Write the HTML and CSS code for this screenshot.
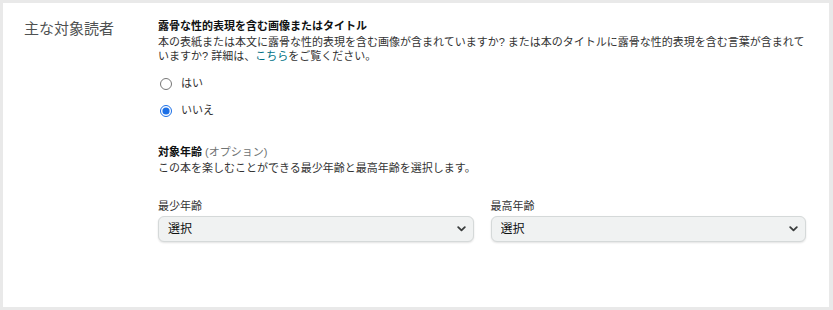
FILE: index.html
```html
<!DOCTYPE html>
<html lang="ja">
<head>
<meta charset="utf-8">
<link rel="stylesheet" href="styles.css">
</head>
<body>
<div class="panel">
  <div class="side-title">主な対象読者</div>
  <div class="content">
    <div class="heading">露骨な性的表現を含む画像またはタイトル</div>
    <p class="desc">本の表紙または本文に露骨な性的表現を含む画像が含まれていますか? または本のタイトルに露骨な性的表現を含む言葉が含まれていますか? 詳細は、<a class="link" href="#">こちら</a>をご覧ください。</p>
    <div class="radios">
      <label class="radio"><input type="radio" name="adult"><span>はい</span></label>
      <label class="radio"><input type="radio" name="adult" checked><span>いいえ</span></label>
    </div>
    <div class="heading age-heading">対象年齢 <span class="optional">(オプション)</span></div>
    <p class="desc">この本を楽しむことができる最少年齢と最高年齢を選択します。</p>
    <div class="selects">
      <div class="field">
        <div class="field-label">最少年齢</div>
        <div class="select-wrap">
          <select class="select"><option>選択</option></select>
          <svg class="chevron" width="9" height="6" viewBox="0 0 9 6"><path d="M1.2 1.2 L4.5 4.4 L7.8 1.2" fill="none" stroke="#3a3d3d" stroke-width="1.8" stroke-linecap="round" stroke-linejoin="round"/></svg>
        </div>
      </div>
      <div class="field">
        <div class="field-label">最高年齢</div>
        <div class="select-wrap">
          <select class="select"><option>選択</option></select>
          <svg class="chevron" width="9" height="6" viewBox="0 0 9 6"><path d="M1.2 1.2 L4.5 4.4 L7.8 1.2" fill="none" stroke="#3a3d3d" stroke-width="1.8" stroke-linecap="round" stroke-linejoin="round"/></svg>
        </div>
      </div>
    </div>
  </div>
</div>
</body>
</html>
```

FILE: styles.css
```css
html, body {
  margin: 0;
  padding: 0;
}
body {
  background: #e9e9e9;
  padding: 3px 4px 3px 3px;
  font-family: "Liberation Sans", "Noto Sans CJK JP", sans-serif;
  color: #0f1111;
}
.panel {
  background: #ffffff;
  height: 304px;
  box-sizing: border-box;
  display: flex;
  padding: 16px 23px 0 21px;
}
.side-title {
  width: 134px;
  flex: none;
  font-size: 15px;
  line-height: 20px;
  color: #4f5252;
}
.content {
  flex: 1;
  min-width: 0;
}
.heading {
  font-size: 11px;
  line-height: 15px;
  font-weight: bold;
  color: #0f1111;
}
.optional {
  font-weight: normal;
  color: #6f7373;
}
.desc {
  margin: 1px 0 0 0;
  font-size: 11px;
  line-height: 14px;
  color: #333;
}
.link {
  color: #007185;
  text-decoration: none;
}
.radios {
  display: flex;
  flex-direction: column;
  gap: 10px;
  margin-top: 12px;
}
.radio {
  display: flex;
  align-items: center;
  gap: 9px;
  font-size: 11px;
  line-height: 17px;
  color: #333;
  padding-left: 2px;
}
.radio input {
  width: 12px;
  height: 12px;
  margin: 0;
  accent-color: #1b6fe6;
}
.age-heading {
  margin-top: 26px;
}
.selects {
  display: grid;
  grid-template-columns: 1fr 1fr;
  gap: 17px;
  margin-top: 24px;
}
.field-label {
  font-size: 11px;
  line-height: 14px;
  color: #333;
}
.select-wrap {
  position: relative;
  margin-top: 3px;
}
.select {
  appearance: none;
  -webkit-appearance: none;
  display: block;
  width: 100%;
  height: 26px;
  box-sizing: border-box;
  border: 1px solid #d5d9d9;
  border-radius: 6px;
  background: #f0f2f2;
  box-shadow: 0 1px 2px rgba(15, 17, 17, 0.12);
  padding: 0 24px 0 9px;
  font-family: "Liberation Sans", "Noto Sans CJK JP", sans-serif;
  font-size: 12px;
  color: #0f1111;
  margin: 0;
}
.chevron {
  position: absolute;
  right: 8px;
  top: 10px;
  pointer-events: none;
}
```
